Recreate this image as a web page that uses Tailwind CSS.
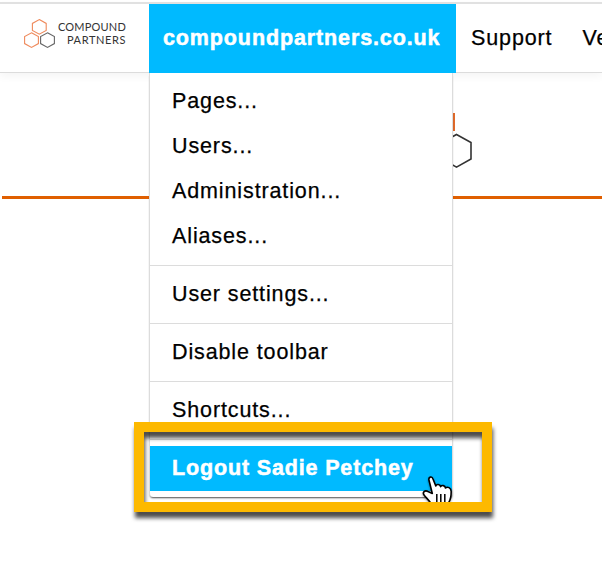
<!DOCTYPE html>
<html lang="en">
<head>
  <meta charset="UTF-8">
  <meta name="viewport" content="width=device-width, initial-scale=1.0">
  <title>Compound Partners</title>
  <script src="https://cdn.jsdelivr.net/npm/@tailwindcss/browser@4"></script>
</head>
<body class="relative w-[602px] h-[576px] overflow-hidden bg-white text-black font-['Liberation_Sans',Arial,sans-serif] text-[21.5px] leading-[45px] tracking-[0.88px] whitespace-nowrap [-webkit-text-stroke:0.25px]">
  <!-- Toolbar -->
  <header class="flex h-[73px] pt-0.5">
    <div class="flex w-full border-t-2 border-t-[#e1e1e1] border-b border-b-[#dcdcdc] shadow-[0_4px_8px_rgba(0,0,0,0.04)]">
      <a class="flex w-[149px] shrink-0 pl-[23px] pt-[13px]">
        <svg class="w-[34px] h-[34px] shrink-0" viewBox="0 0 34 34" fill="none" stroke-width="1.1">
          <path stroke="#ef8a5c" d="M16.3 2.6 23.2 6.4V13.4L16.3 17.2 9.4 13.4V6.4Z"/>
          <path stroke="#ef8a5c" d="M8.5 15.8 15.4 19.6V26.6L8.5 30.4 1.6 26.6V19.6Z"/>
          <path stroke="#666" d="M24.5 15.8 31.4 19.6V26.6L24.5 30.4 17.6 26.6V19.6Z"/>
        </svg>
        <span class="w-[69px] pt-[3px] text-right font-[Lato,sans-serif] text-[11px] leading-[13px] text-[#333] [-webkit-text-stroke:0]"><span class="tracking-[0.2px]">COMPOUND</span><br><span class="tracking-[0.6px]">PARTNERS</span></span>
      </a>
      <a class="flex w-[307px] h-[69px] shrink-0 items-center pl-[14px] bg-[#00baff] text-white font-bold tracking-[0.88px] [-webkit-text-stroke:0.5px]">compoundpartners.co.uk</a>
      <a class="flex h-[69px] shrink-0 items-center pl-[15px]">Support</a>
      <a class="flex h-[69px] shrink-0 items-center pl-[30px]">Ve</a>
    </div>
  </header>

  <!-- Page behind the menu -->
  <main class="ml-0.5 h-[126px] border-b-3 border-[#e05f00]">
    <svg class="ml-[428px] mt-[37px] w-[44px] h-[62px] inline-block align-top" viewBox="0 0 44 62" fill="none" stroke-width="1.6">
      <path stroke="#e06a2b" stroke-width="2" d="M24 3V21"/>
      <path stroke="#333" d="M26.5 24.5 41 32.5V49L26.5 57.2 12 49V32.5Z"/>
    </svg>
  </main>

  <!-- Dropdown -->
  <nav class="absolute left-[149px] top-[73px] w-[304px] h-[424px] rounded-b-[4px] border-x border-[#dcdcdc] bg-white py-1.5 shadow-[0_2px_2px_-1px_rgba(0,0,0,0.7)]">
    <a class="block pl-[22px]">Pages...</a>
    <a class="block pl-[22px]">Users...</a>
    <a class="block pl-[22px]">Administration...</a>
    <a class="block pl-[22px]">Aliases...</a>
    <hr class="my-1.5 border-[#dcdcdc]">
    <a class="block pl-[22px]">User settings...</a>
    <hr class="my-1.5 border-[#dcdcdc]">
    <a class="block pl-[22px]">Disable toolbar</a>
    <hr class="my-1.5 border-[#dcdcdc]">
    <a class="block pl-[22px]">Shortcuts...</a>
    <hr class="my-1.5 border-[#dcdcdc]">
    <a class="block bg-[#00baff] pl-[22px] font-bold tracking-[0.85px] text-white [-webkit-text-stroke:0.5px]">Logout Sadie Petchey</a>
  </nav>

  <!-- Pointer -->
  <svg class="absolute left-[420px] top-[474px] w-[36px] h-[34px] drop-shadow-[0_1px_1px_rgba(0,0,0,0.4)]" viewBox="0 0 36 34">
    <path fill="#fff" stroke="#000" stroke-width="1.6" stroke-linejoin="round" d="M12.3 19.5 9 6.2C8.2 2.8 12 1.8 13 5L15.8 12C16.5 9.8 20 10.2 20.6 12.6 21.8 10.8 25 11.3 25.5 14 27.5 12.3 31 13.5 31.2 17.5 31.2 21.5 30.8 25 29 28V34H13C12 29 8 25.8 4.4 21.5 1.8 18.3 5 15.7 8 17.5Z"/>
    <path fill="none" stroke="#000" stroke-width="1.5" d="M16.8 20V28M20.8 20V28M24.8 20V28"/>
  </svg>

  <!-- Highlight frame -->
  <div class="absolute left-[134px] top-[422px] w-[358px] h-[90px] border-10 border-[#fdb900] drop-shadow-[1px_6px_2px_rgba(0,0,0,0.7)]"></div>
</body>
</html>
